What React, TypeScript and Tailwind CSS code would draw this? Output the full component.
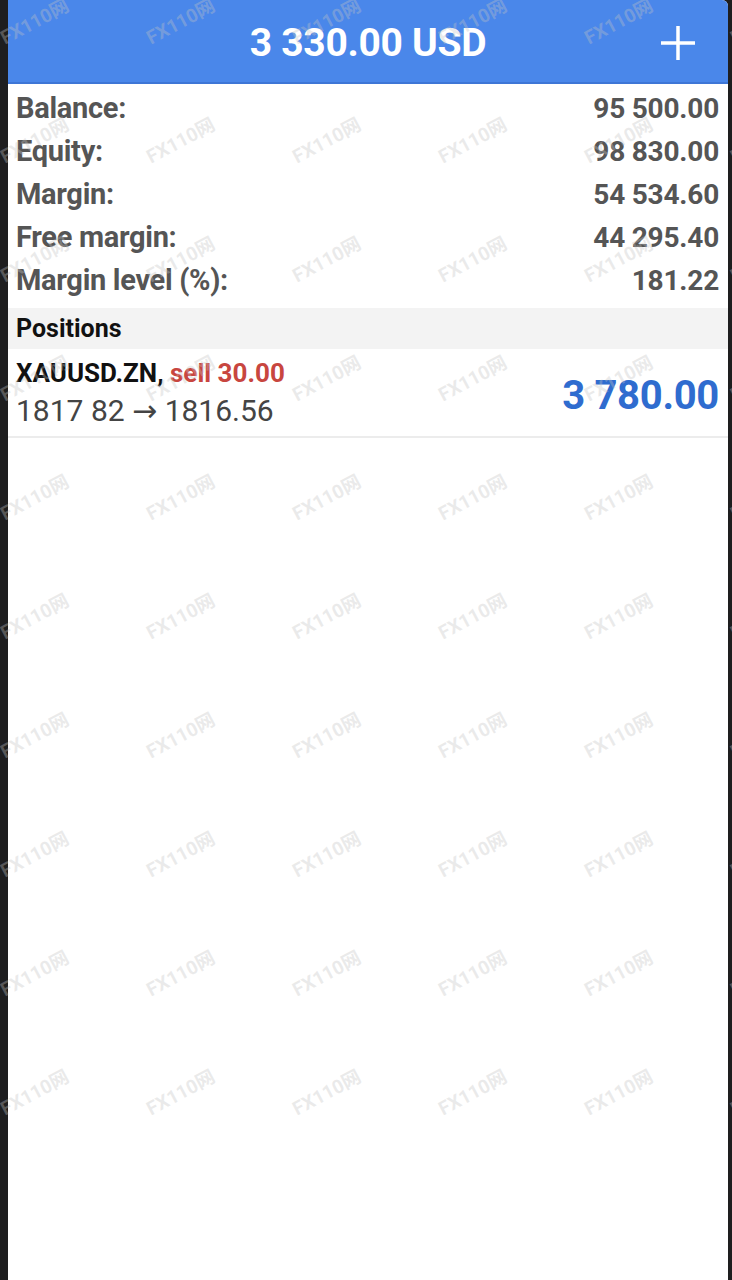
const account = [
  { label: "Balance:", value: "95 500.00" },
  { label: "Equity:", value: "98 830.00" },
  { label: "Margin:", value: "54 534.60" },
  { label: "Free margin:", value: "44 295.40" },
  { label: "Margin level (%):", value: "181.22" },
]

const marks = Array.from({ length: 60 }, (_, i) => i)

function Watermarks() {
  return (
    <div className="pointer-events-none absolute left-[-38px] top-[-37px] grid grid-cols-[repeat(6,146px)] auto-rows-[119px]">
      {marks.map((i) => (
        <div key={i} className="flex items-center justify-center">
          <span className="-rotate-[28deg] text-[19px] font-bold text-[#c4c4c4]/35 [font-family:Roboto,'Noto_Sans_CJK_SC',sans-serif]">
            FX110网
          </span>
        </div>
      ))}
    </div>
  )
}

export default function App() {
  return (
    <div className="relative flex h-[1280px] w-[732px] overflow-hidden bg-[#1e1e1f] pl-[8px] pr-[4px] [font-family:Roboto,'Liberation_Sans',sans-serif]">
      <div className="flex flex-1 flex-col overflow-hidden rounded-tr-[6px] bg-white">
        <header className="grid h-[84px] grid-cols-[1fr_auto_1fr] items-center border-b-2 border-[#3e76d6] bg-[#4a87ea] pt-[4px]">
          <div />
          <h1 className="text-[39px] font-bold tracking-[-0.3px] text-white">3 330.00 USD</h1>
          <div className="flex justify-end pr-[32px]">
            <svg width="36" height="36" viewBox="0 0 36 36" fill="none" stroke="white" strokeWidth="3.5">
              <path d="M18 1v34M1 18h34" />
            </svg>
          </div>
        </header>

        <div className="pt-[3px] pb-[6px]">
          {account.map((row) => (
            <div key={row.label} className="flex h-[43px] items-center justify-between pl-[8px] pr-[9px] text-[#555555]">
              <span className="text-[29px] font-bold tracking-[-0.3px]">{row.label}</span>
              <span className="text-[28px] font-bold tracking-[-0.2px]">{row.value}</span>
            </div>
          ))}
        </div>

        <div className="flex h-[41px] items-center bg-[#f3f3f3] pl-[8px] text-[25px] font-bold text-[#111111]">
          Positions
        </div>

        <div className="flex items-center justify-between border-b-2 border-[#ececec] pl-[8px] pr-[9px]">
          <div className="flex flex-col pt-[6px] pb-[5px]">
            <div className="text-[26px] leading-[36px] font-bold text-[#111111]">
              XAUUSD.ZN, <span className="text-[#c8463f]">sell 30.00</span>
            </div>
            <div className="text-[30px] leading-[40px] text-[#444444]">
              1817 82 <span className="[font-family:'DejaVu_Sans',sans-serif]">→</span> 1816.56
            </div>
          </div>
          <div className="pt-[6px] text-[40px] font-bold tracking-[-0.3px] text-[#2f6ccf]">3 780.00</div>
        </div>
      </div>
      <Watermarks />
    </div>
  )
}
